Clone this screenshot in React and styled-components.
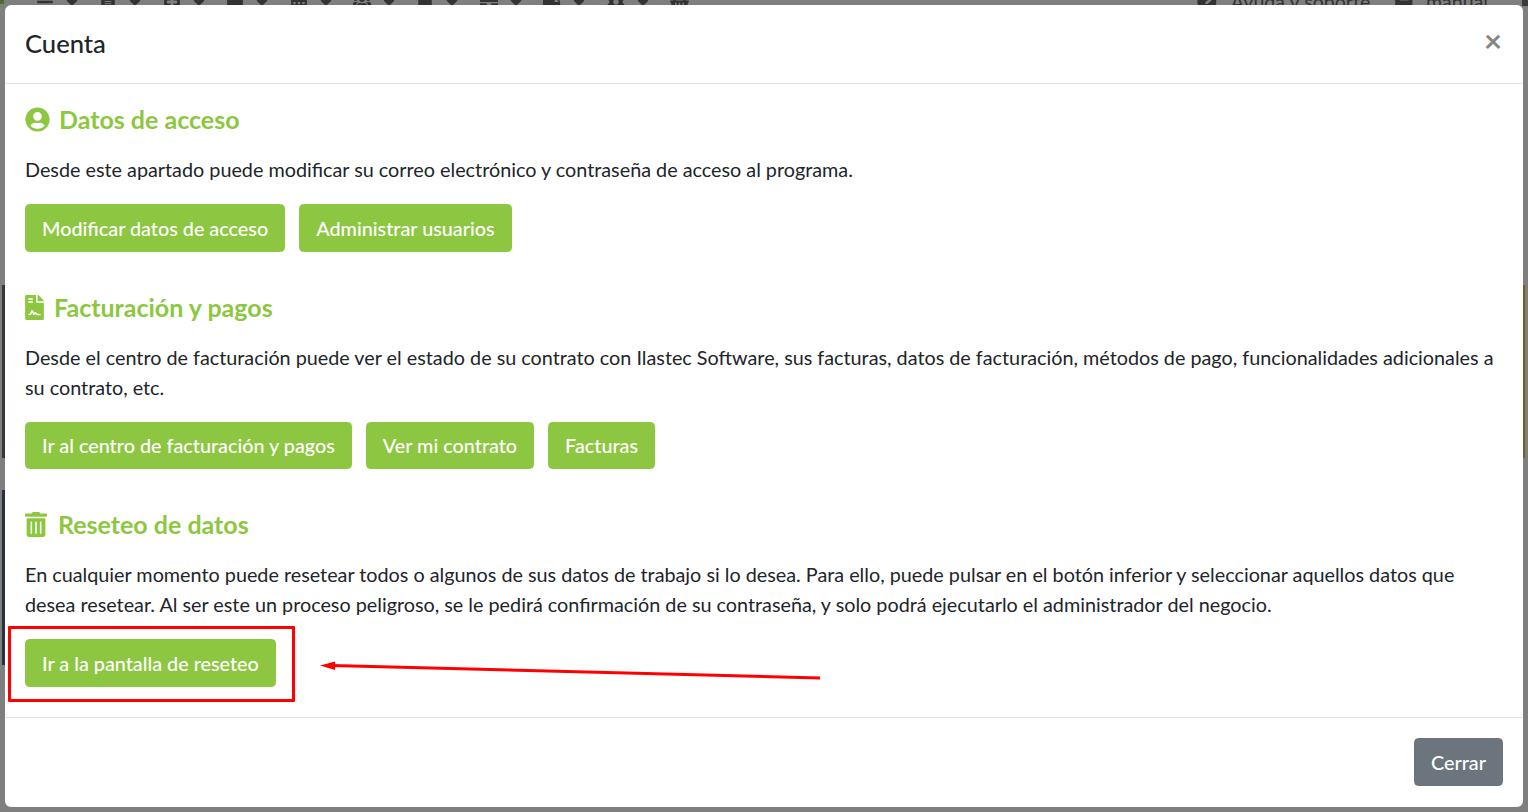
import React from "react";
import styled, { createGlobalStyle } from "styled-components";
import {
  FaUserCircle,
  FaFileContract,
  FaTrashAlt,
  FaCaretDown,
  FaBars,
  FaFileAlt,
  FaPlusSquare,
  FaSquare,
  FaCalendarAlt,
  FaUsers,
  FaClipboard,
  FaBriefcase,
  FaTruck,
  FaCog,
  FaShoppingBasket,
  FaQuestionCircle,
  FaBook,
} from "react-icons/fa";

const GlobalStyle = createGlobalStyle`
  html, body {
    margin: 0;
    height: 100%;
    overflow: hidden;
    background: #7f7f7f;
    font-family: Lato, "Open Sans", sans-serif;
  }
`;

const Page = styled.div`
  position: relative;
  height: 812px;
  padding: 5px;
  box-sizing: border-box;
`;

// dimmed app behind the modal, only its edges show
const TopBar = styled.div`
  position: absolute;
  top: -7px;
  left: 36px;
  right: 40px;
  height: 18px;
  display: flex;
  justify-content: space-between;
  color: #333;
  font-size: 19px;
  line-height: 18px;
  overflow: hidden;
`;

const TopGroup = styled.div`
  display: flex;
  align-items: center;
`;

const TopTool = styled.div`
  width: 63.4px;
  display: flex;
  align-items: center;
  gap: 9px;
  font-size: 18px;
`;

const HelpLink = styled.div`
  display: flex;
  align-items: center;
  gap: ${(p) => p.$gap}px;
  margin-left: ${(p) => p.$offset}px;
  font-size: 19.6px;
`;

const BehindStrip = styled.div`
  position: absolute;
  width: 3px;
  top: ${(p) => p.$top}px;
  height: ${(p) => p.$height}px;
  background: ${(p) => p.$color};
  ${(p) => (p.$right ? "right: 3px;" : "left: 2px;")}
`;

const BehindCorner = styled.div`
  position: absolute;
  top: 0;
  width: ${(p) => p.$size}px;
  height: ${(p) => p.$size}px;
  background: ${(p) => p.$color};
  ${(p) => (p.$right ? "right: 0;" : "left: 0;")}
`;

const Modal = styled.div`
  position: relative;
  height: 802px;
  display: flex;
  flex-direction: column;
  background: #fff;
  border-radius: 6px;
  box-sizing: border-box;
`;

const Header = styled.header`
  height: 79px;
  flex: none;
  display: flex;
  align-items: center;
  justify-content: space-between;
  box-sizing: border-box;
  padding: 0 20px;
  border-bottom: 1px solid #dee2e6;
`;

const Title = styled.h5`
  margin: -2px 0 0;
  font-size: 25.6px;
  font-weight: 500;
  color: #212529;
`;

const CloseButton = styled.button`
  border: 0;
  background: none;
  padding: 0;
  font: 700 31px/1 Lato, sans-serif;
  color: #858585;
  margin: -7px 1px 0 0;
`;

const Body = styled.main`
  flex: 1;
  padding: 21px 20px 0;
  display: flex;
  flex-direction: column;
  gap: 41px;
`;

const Section = styled.section`
  display: flex;
  flex-direction: column;
  align-items: flex-start;
`;

const SectionTitle = styled.h4`
  margin: 0 0 20px;
  height: 29px;
  display: flex;
  align-items: center;
  gap: ${(p) => p.$gap}px;
  font-size: 25px;
  font-weight: 700;
  line-height: 29px;
  color: #8dc73f;
  svg {
    width: ${(p) => p.$iconWidth}px;
    height: 25px;
    flex: none;
  }
`;

const Text = styled.p`
  margin: 0 0 20px;
  font-size: 19.8px;
  line-height: 30px;
  color: #212529;
`;

const ButtonRow = styled.div`
  display: flex;
  gap: 14px;
`;

const Button = styled.button`
  height: 47.6px;
  padding: 0 16px;
  border: 1px solid ${(p) => (p.$muted ? "#6c757d" : "#8dc742")};
  border-radius: 4.5px;
  background: ${(p) => (p.$muted ? "#6c757d" : "#8dc742")};
  color: #fff;
  font-family: Lato, sans-serif;
  font-size: 19.8px;
  font-weight: 500;
  white-space: nowrap;
`;

const Footer = styled.footer`
  height: 90px;
  flex: none;
  display: flex;
  align-items: flex-start;
  justify-content: flex-end;
  box-sizing: border-box;
  padding: 20px 20px 0;
  border-top: 1px solid #dee2e6;
`;

// annotation drawn over the screenshot
const Highlight = styled.div`
  position: absolute;
  left: 2.5px;
  top: 620.5px;
  width: 287px;
  height: 76px;
  box-sizing: border-box;
  border: 3px solid #ff0000;
  border-radius: 1px;
`;

const ArrowSvg = styled.svg`
  position: absolute;
  left: 305px;
  top: 645px;
  width: 520px;
  height: 40px;
`;

const tools = [
  FaBars,
  FaFileAlt,
  FaPlusSquare,
  FaSquare,
  FaCalendarAlt,
  FaUsers,
  FaClipboard,
  FaBriefcase,
  FaTruck,
  FaCog,
];

export default function App() {
  return (
    <>
      <GlobalStyle />
      <Page>
        <TopBar>
          <TopGroup>
            {tools.map((Icon, i) => (
              <TopTool key={i}>
                <Icon />
                <FaCaretDown />
              </TopTool>
            ))}
            <FaShoppingBasket />
          </TopGroup>
          <TopGroup>
            <HelpLink $gap={14}>
              <FaQuestionCircle />
              Ayuda y soporte
            </HelpLink>
            <HelpLink $gap={12} $offset={24}>
              <FaBook />
              manual
            </HelpLink>
          </TopGroup>
        </TopBar>
        <BehindCorner $size={4} $color="#4f6b2c" />
        <BehindCorner $right $size={6} $color="#3a3a3a" />
        <BehindStrip $top={285} $height={173} $color="#3b3538" />
        <BehindStrip $top={490} $height={175} $color="#2a3040" />
        <BehindStrip $right $top={285} $height={173} $color="#7d5a22" />

        <Modal>
          <Header>
            <Title>Cuenta</Title>
            <CloseButton>×</CloseButton>
          </Header>
          <Body>
            <Section>
              <SectionTitle $gap={9} $iconWidth={25}>
                <FaUserCircle />
                Datos de acceso
              </SectionTitle>
              <Text>
                Desde este apartado puede modificar su correo electrónico y contraseña de acceso al programa.
              </Text>
              <ButtonRow>
                <Button>Modificar datos de acceso</Button>
                <Button>Administrar usuarios</Button>
              </ButtonRow>
            </Section>
            <Section>
              <SectionTitle $gap={10} $iconWidth={19}>
                <FaFileContract />
                Facturación y pagos
              </SectionTitle>
              <Text>
                Desde el centro de facturación puede ver el estado de su contrato con Ilastec Software, sus facturas, datos de facturación, métodos de pago, funcionalidades adicionales a su contrato, etc.
              </Text>
              <ButtonRow>
                <Button>Ir al centro de facturación y pagos</Button>
                <Button>Ver mi contrato</Button>
                <Button>Facturas</Button>
              </ButtonRow>
            </Section>
            <Section>
              <SectionTitle $gap={11} $iconWidth={22}>
                <FaTrashAlt />
                Reseteo de datos
              </SectionTitle>
              <Text>
                En cualquier momento puede resetear todos o algunos de sus datos de trabajo si lo desea. Para ello, puede pulsar en el botón inferior y seleccionar aquellos datos que desea resetear. Al ser este un proceso peligroso, se le pedirá confirmación de su contraseña, y solo podrá ejecutarlo el administrador del negocio.
              </Text>
              <ButtonRow>
                <Button>Ir a la pantalla de reseteo</Button>
              </ButtonRow>
            </Section>
          </Body>
          <Footer>
            <Button $muted>Cerrar</Button>
          </Footer>
          <Highlight />
          <ArrowSvg viewBox="0 0 520 40">
            <line x1="510" y1="28" x2="22" y2="15.6" stroke="#ff0000" strokeWidth="3" />
            <polygon points="10,15.6 25,11.5 25,20" fill="#ff0000" />
          </ArrowSvg>
        </Modal>
      </Page>
    </>
  );
}
